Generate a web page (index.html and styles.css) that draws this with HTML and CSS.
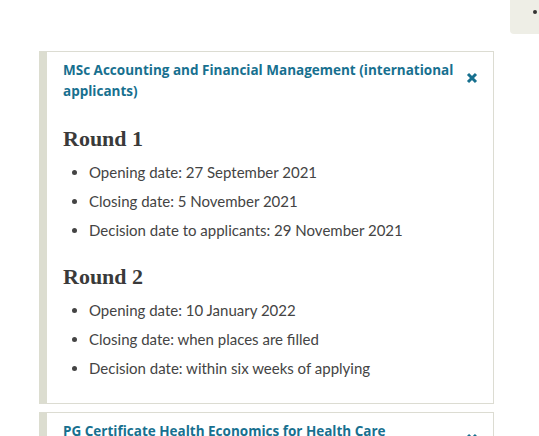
FILE: index.html
```html
<!DOCTYPE html>
<html lang="en">
<head>
<meta charset="utf-8">
<link rel="stylesheet" href="styles.css">
</head>
<body>
<div class="corner-panel"><span class="corner-dot"></span></div>
<div class="page">
  <section class="card">
    <div class="card-head">
      <h2 class="card-title">MSc Accounting and Financial Management (international applicants)</h2>
      <span class="close" aria-hidden="true"><svg width="12" height="12" viewBox="0 0 12 12"><path d="M2 2 L10 10 M10 2 L2 10" stroke="#17708f" stroke-width="3"/></svg></span>
    </div>
    <div class="card-body">
      <h3 class="round">Round 1</h3>
      <ul class="dates">
        <li>Opening date: 27 September 2021</li>
        <li>Closing date: 5 November 2021</li>
        <li>Decision date to applicants: 29 November 2021</li>
      </ul>
      <h3 class="round second">Round 2</h3>
      <ul class="dates">
        <li>Opening date: 10 January 2022</li>
        <li>Closing date: when places are filled</li>
        <li>Decision date: within six weeks of applying</li>
      </ul>
    </div>
  </section>
  <section class="card">
    <div class="card-head">
      <h2 class="card-title">PG Certificate Health Economics for Health Care</h2>
      <span class="close" aria-hidden="true"><svg width="12" height="12" viewBox="0 0 12 12"><path d="M2 2 L10 10 M10 2 L2 10" stroke="#17708f" stroke-width="3"/></svg></span>
    </div>
  </section>
</div>
</body>
</html>
```

FILE: styles.css
```css
html, body {
  margin: 0;
  padding: 0;
  background: #ffffff;
}
body {
  font-family: "Lato", "Open Sans", sans-serif;
  color: #3b3b3b;
  height: 436px;
  overflow: hidden;
  position: relative;
}
.corner-panel {
  position: absolute;
  top: 0;
  right: 0;
  width: 29px;
  height: 34px;
  background: #eeeee6;
  border-bottom-left-radius: 4px;
}
.corner-dot {
  position: absolute;
  top: 10px;
  left: 23px;
  width: 4px;
  height: 4px;
  border-radius: 50%;
  background: #333;
}
.page {
  padding: 51px 0 0 39px;
  width: 455px;
  display: flex;
  flex-direction: column;
  gap: 8px;
}
.card {
  border: 1px solid #dcdcd2;
  border-left: 8px solid #dcddd0;
  background: #fff;
}
.card-head {
  display: flex;
  align-items: flex-start;
  justify-content: space-between;
  padding: 8px 15px 0 16px;
  gap: 8px;
}
.card-title {
  margin: 0;
  font-family: "Open Sans", "Lato", sans-serif;
  font-weight: 700;
  font-size: 13.5px;
  line-height: 21px;
  color: #17708f;
}
.close {
  display: flex;
  margin-top: 12px;
  flex: none;
}
.card-body {
  padding: 0 15px 20px 16px;
}
.round {
  margin: 22px 0 4px;
  font-family: "Liberation Serif", serif;
  font-weight: 700;
  font-size: 22px;
  line-height: 30px;
  color: #3a3a3a;
}
.round.second {
  margin-top: 17px;
}
.dates {
  margin: 0;
  padding-left: 26px;
}
.dates li {
  font-size: 15px;
  line-height: 29px;
  color: #444444;
}
```
